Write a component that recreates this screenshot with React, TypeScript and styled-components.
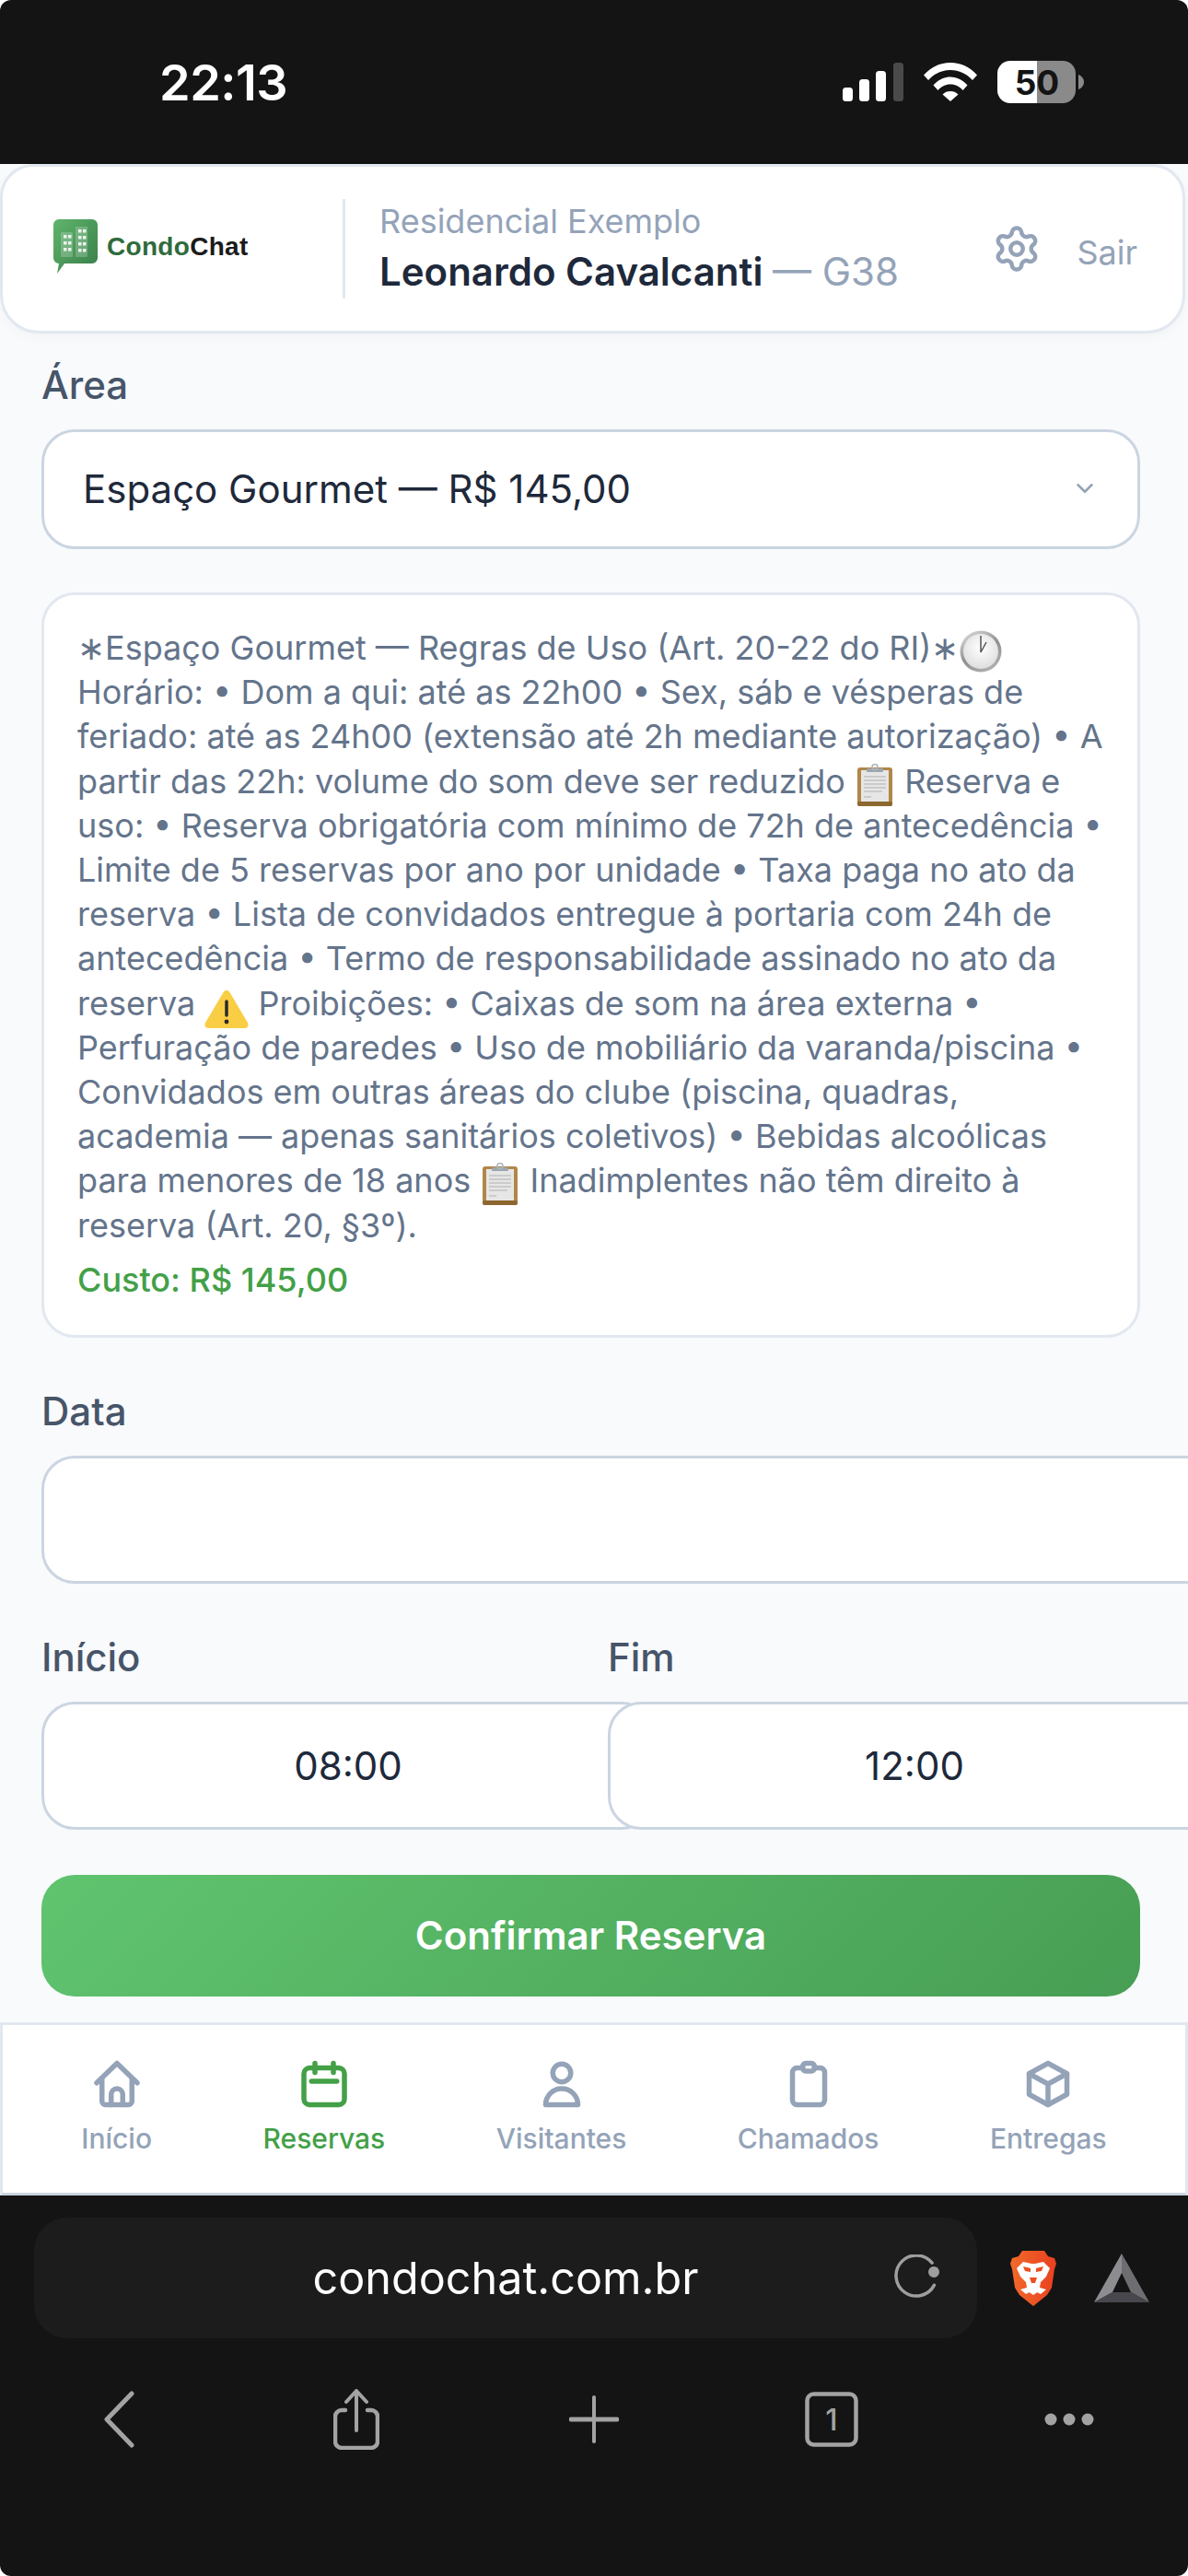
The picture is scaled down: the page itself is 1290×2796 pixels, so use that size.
import { createGlobalStyle, styled } from 'styled-components';
import { ChevronDown, Settings } from 'lucide-react';

const GlobalStyle = createGlobalStyle`
  html, body { margin: 0; padding: 0; background: #fff; }
  * { box-sizing: border-box; }
  body { font-family: Inter, "Noto Sans", sans-serif; }
`;

const Screen = styled.div`
  width: 1290px;
  height: 2796px;
  display: flex;
  flex-direction: column;
  overflow: hidden;
  border-radius: 12px;
  background: #f8fafc;
`;

const StatusBar = styled.div`
  height: 178px;
  flex: none;
  background: #141414;
  display: flex;
  align-items: center;
  padding: 0 113px 0 173px;
`;

const Clock = styled.span`
  font-size: 54px;
  font-weight: 600;
  letter-spacing: -0.5px;
  color: #fff;
  flex: 1;
`;

const StatusIcons = styled.div`
  display: flex;
  align-items: center;
  gap: 22px;
`;

const Header = styled.header`
  height: 184px;
  flex: none;
  margin-right: 3px;
  display: flex;
  align-items: center;
  padding: 0 49px 0 55px;
  background: #fff;
  border: 3px solid #e2e8f0;
  border-radius: 36px 36px 42px 42px;
  box-shadow: 0 4px 12px rgba(15, 23, 42, 0.03);
`;

const Divider = styled.div`
  width: 3px;
  height: 108px;
  background: #e2e8f0;
  margin: 0 37px 0 96px;
`;

const Identity = styled.div`
  flex: 1;
  display: flex;
  flex-direction: column;
  gap: 4px;
  padding-bottom: 2px;
`;

const Condo = styled.div`
  font-size: 36px;
  line-height: 48px;
  color: #94a3b8;
`;

const Resident = styled.div`
  font-size: 42px;
  line-height: 54px;
  font-weight: 600;
  color: #1e293b;
  white-space: nowrap;
`;

const Unit = styled.span`
  font-weight: 400;
  color: #94a3b8;
`;

const GearSlot = styled.span`
  display: flex;
  color: #94a3b8;
`;

const SignOut = styled.span`
  color: #94a3b8;
  font-size: 36px;
  margin-left: 38px;
  padding-top: 7px;
`;

const Form = styled.main`
  flex: 1;
  display: flex;
  flex-direction: column;
  padding: 32px 52px 0 45px;
`;

const Label = styled.label`
  display: block;
  font-size: 42px;
  line-height: 48px;
  font-weight: 500;
  color: #475569;
  margin-bottom: 24px;
`;

const Select = styled.div`
  height: 130px;
  flex: none;
  display: flex;
  align-items: center;
  justify-content: space-between;
  padding: 0 42px 2px;
  font-size: 42px;
  color: #1e293b;
  background: #fff;
  border: 3px solid #cbd5e1;
  border-radius: 36px;
  svg { color: #94a3b8; }
`;

const RulesCard = styled.section`
  flex: none;
  margin: 47px 0 56px;
  padding: 33px 36px 36px;
  background: #fff;
  border: 3px solid #e2e8f0;
  border-radius: 36px;
`;

const RulesText = styled.p`
  margin: 0;
  font-size: 36px;
  line-height: 48.2px;
  color: #64748b;
  svg { vertical-align: -8px; margin: -6px 0; }
`;

const ClosingStar = styled.span`
  letter-spacing: -9px;
`;

const Cost = styled.p`
  margin: 11px 0 0;
  font-size: 36px;
  line-height: 48px;
  font-weight: 500;
  color: #43a047;
`;

const Input = styled.div<{ $width: number }>`
  width: ${({ $width }) => $width}px;
  height: 139px;
  flex: none;
  display: flex;
  align-items: center;
  justify-content: center;
  font-size: 42px;
  color: #1e293b;
  background: #fff;
  border: 3px solid #cbd5e1;
  border-radius: 36px;
`;

const TimeRow = styled.div`
  display: flex;
  margin-top: 56px;
`;

const TimeField = styled.div`
  width: 615px;
  flex: none;
`;

const ConfirmButton = styled.button`
  height: 132px;
  flex: none;
  margin-top: 49px;
  border: 0;
  border-radius: 36px;
  font-family: inherit;
  font-size: 42px;
  font-weight: 600;
  color: #fff;
  background: linear-gradient(135deg, #60c46f 0%, #479e54 100%);
`;

const BottomNav = styled.nav`
  height: 188px;
  flex: none;
  display: flex;
  justify-content: space-around;
  padding: 34px 25px 0;
  background: #fff;
  border: 3px solid #e2e8f0;
  border-bottom-color: #cbd5e1;
`;

const NavItem = styled.div<{ $active?: boolean }>`
  display: flex;
  flex-direction: column;
  align-items: center;
  gap: 11px;
  font-size: 30px;
  line-height: 36px;
  font-weight: 500;
  color: ${({ $active }) => ($active ? '#43a047' : '#94a3b8')};
`;

const BrowserChrome = styled.div`
  height: 413px;
  flex: none;
  background: #141414;
  padding: 24px 0 0;
`;

const AddressRow = styled.div`
  display: flex;
  align-items: center;
  padding: 0 42px 0 37px;
`;

const UrlBar = styled.div`
  width: 1024px;
  height: 131px;
  position: relative;
  display: flex;
  align-items: center;
  justify-content: center;
  font-size: 48.500px;
  color: #fff;
  background: #1c1c1c;
  border-radius: 36px;
`;

const ReloadSlot = styled.span`
  position: absolute;
  right: 40px;
  top: 40px;
  display: flex;
`;

const AddressIcons = styled.div`
  flex: 1;
  display: flex;
  justify-content: space-between;
  align-items: center;
  padding-left: 36px;
`;

const Toolbar = styled.div`
  display: flex;
  justify-content: space-around;
  align-items: center;
  height: 120px;
  margin-top: 28px;
`;

const ToolbarSlot = styled.span`
  display: flex;
  width: 70px;
  height: 70px;
  align-items: center;
  justify-content: center;
`;

function SignalIcon() {
  return (
    <svg width="66" height="42" viewBox="0 0 66 42">
      <rect x="0" y="27" width="11" height="15" rx="3.500" fill="#fff" />
      <rect x="18" y="18" width="11" height="24" rx="3.500" fill="#fff" />
      <rect x="36" y="9" width="11" height="33" rx="3.500" fill="#fff" />
      <rect x="55" y="0" width="11" height="42" rx="3.500" fill="#4a4a4a" />
    </svg>
  );
}

function WifiIcon() {
  return (
    <svg width="58" height="42" viewBox="0 0 58 42" fill="#fff">
      <path d="M0 13.500C7.500 5 17.500 0 29 0s21.500 5 29 13.500l-5 5.500C46.500 12 38.500 8 29 8S11.500 12 5 19Z" />
      <path d="M10.500 24.500C15.500 19 21.500 15.500 29 15.500s13.500 3.500 18.500 9l-5 5.500c-3.500-4-8-6.500-13.500-6.500s-10 2.500-13.500 6.500Z" />
      <path d="M20.500 34.500c2.500-2.500 5-3.500 8.500-3.500s6 1 8.500 3.500L29 42Z" />
    </svg>
  );
}

function BatteryIcon() {
  return (
    <svg width="94" height="46" viewBox="0 0 94 46">
      <defs>
        <clipPath id="battery-body">
          <rect x="0" y="0" width="85" height="46" rx="14" />
        </clipPath>
      </defs>
      <g clipPath="url(#battery-body)">
        <rect x="0" y="0" width="43" height="46" fill="#fff" />
        <rect x="43" y="0" width="42" height="46" fill="#8a8a8a" />
      </g>
      <path d="M88 15c3 1 6 4 6 8s-3 7-6 8Z" fill="#8a8a8a" />
      <text x="43" y="37" textAnchor="middle" fontFamily="Inter, sans-serif" fontSize="37" fontWeight="700" fill="#141414">
        50
      </text>
    </svg>
  );
}

function Logo() {
  return (
    <svg width="218" height="64" viewBox="0 0 218 64">
      <defs>
        <linearGradient id="logo-green" x1="0" y1="0" x2="1" y2="1">
          <stop offset="0" stopColor="#5fb56c" />
          <stop offset="1" stopColor="#387d48" />
        </linearGradient>
      </defs>
      <path d="M6 0h36a6 6 0 0 1 6 6v36a6 6 0 0 1-6 6H12L4 59l2-11a6 6 0 0 1-6-6V6a6 6 0 0 1 6-6Z" fill="url(#logo-green)" />
      <rect x="8" y="14" width="13" height="27" rx="1" fill="#fff" fillOpacity="0.22" />
      <rect x="24" y="8" width="13" height="33" rx="1" fill="#fff" fillOpacity="0.22" />
      {[17, 24, 31].map((y) =>
        [11, 16].map((x) => <rect key={`a${x}${y}`} x={x} y={y} width="3.500" height="3.500" fill="#fff" fillOpacity="0.85" />)
      )}
      {[11, 18, 25, 32].map((y) =>
        [27, 32].map((x) => <rect key={`b${x}${y}`} x={x} y={y} width="3.500" height="3.500" fill="#fff" fillOpacity="0.85" />)
      )}
      <text x="58" y="39" fontFamily="Liberation Sans, Arial, sans-serif" fontSize="28" fontWeight="700" letterSpacing="0.3">
        <tspan fill="#2f6b3c">Condo</tspan>
        <tspan fill="#1b1b1b">Chat</tspan>
      </text>
    </svg>
  );
}

function ClockEmoji() {
  return (
    <svg width="46" height="46" viewBox="0 0 46 46">
      <defs>
        <linearGradient id="clock-bezel" x1="0.2" y1="0" x2="0.8" y2="1">
          <stop offset="0" stopColor="#d8d8d8" />
          <stop offset="0.5" stopColor="#8f8f8f" />
          <stop offset="1" stopColor="#b5b5b5" />
        </linearGradient>
        <radialGradient id="clock-face" cx="0.5" cy="0.4" r="0.65">
          <stop offset="0" stopColor="#ffffff" />
          <stop offset="1" stopColor="#dcdcdc" />
        </radialGradient>
      </defs>
      <circle cx="23" cy="23" r="22.500" fill="url(#clock-bezel)" />
      <circle cx="23" cy="23" r="19" fill="url(#clock-face)" />
      <path d="M23 24V6" stroke="#555" strokeWidth="1.500" />
      <path d="M23 24l6-11" stroke="#555" strokeWidth="1.500" />
    </svg>
  );
}

function ClipboardEmoji() {
  return (
    <svg width="44" height="46" viewBox="0 0 44 46">
      <rect x="3" y="4" width="38" height="42" rx="3" fill="#b08748" />
      <rect x="3" y="41" width="38" height="5" rx="2" fill="#8c6730" />
      <rect x="7" y="7" width="30" height="34" fill="#e6e6e6" />
      <rect x="13" y="5" width="18" height="4" rx="1" fill="#9ea6ad" />
      <circle cx="22" cy="3.500" r="3" fill="none" stroke="#aeb5bb" strokeWidth="1.600" />
      <path d="M10 14h24M10 18h24M10 22h24M10 26h24M10 30h20M10 36h8" stroke="#c2c2c2" strokeWidth="1.400" />
    </svg>
  );
}

function WarningEmoji() {
  return (
    <svg width="48" height="42" viewBox="0 0 48 42">
      <path d="M24 1c2 0 3 1 4 3l19 32c1.500 3 0 6-3.500 6h-39C1 42-.5 39 1 36L20 4c1-2 2-3 4-3Z" fill="#f9ce45" />
      <path d="M24 13v15" stroke="#2a2a2a" strokeWidth="3.500" strokeLinecap="round" />
      <circle cx="24" cy="35" r="2.400" fill="#2a2a2a" />
    </svg>
  );
}

function NavGlyph({ children }: { children: React.ReactNode }) {
  return (
    <svg width="60" height="60" viewBox="0 0 24 24" fill="none" stroke="currentColor" strokeWidth="2.200" strokeLinecap="round" strokeLinejoin="round">
      {children}
    </svg>
  );
}

function HouseIcon() {
  return (
    <NavGlyph>
      <path d="M3.200 11.500L12 3l8.800 8.500" />
      <path d="M5.500 9.500V19.500a1.500 1.500 0 0 0 1.500 1.500h10a1.500 1.500 0 0 0 1.500-1.500V9.500" />
      <path d="M9.500 21v-4.500a2.500 2.500 0 0 1 5 0V21" />
    </NavGlyph>
  );
}

function CalendarIcon() {
  return (
    <NavGlyph>
      <rect x="3.200" y="5" width="17.600" height="16" rx="2.500" />
      <path d="M8 3v4M16 3v4M6.500 10.800h11" />
    </NavGlyph>
  );
}

function UserIcon() {
  return (
    <NavGlyph>
      <circle cx="12" cy="7.200" r="3.900" />
      <path d="M5 21a7 7 0 0 1 14 0Z" />
    </NavGlyph>
  );
}

function ClipboardIcon() {
  return (
    <NavGlyph>
      <path d="M9.500 5H7a2 2 0 0 0-2 2v12a2 2 0 0 0 2 2h10a2 2 0 0 0 2-2V7a2 2 0 0 0-2-2h-2.500" />
      <rect x="9.500" y="3" width="5" height="3.400" rx="1.200" />
    </NavGlyph>
  );
}

function BoxIcon() {
  return (
    <NavGlyph>
      <path d="M12 3l8.200 4.500v9L12 21l-8.200-4.500v-9Z" />
      <path d="M3.800 7.500L12 12l8.200-4.500M12 12v9" />
    </NavGlyph>
  );
}

function ReloadIcon() {
  return (
    <svg width="50" height="48" viewBox="0 0 50 48" fill="none">
      <path d="M40 8A22 22 0 1 0 44 32" stroke="#9e9e9e" strokeWidth="3.500" strokeLinecap="round" transform="rotate(4 24 24)" />
      <circle cx="43" cy="19" r="6" fill="#9e9e9e" />
    </svg>
  );
}

function BraveIcon() {
  return (
    <svg width="50" height="60" viewBox="0 0 50 60">
      <defs>
        <linearGradient id="brave-orange" x1="0" y1="0" x2="1" y2="0">
          <stop offset="0" stopColor="#f26a2a" />
          <stop offset="1" stopColor="#e8401f" />
        </linearGradient>
      </defs>
      <path d="M13 0h24l4 6 7 2 2 6-2 6-3 20-5 8-15 12-15-12-5-8-3-20-2-6 2-6 7-2Z" fill="url(#brave-orange)" />
      <path d="M7 19l7-7 9 2h4l9-2 7 7-4 9-6 6-1 6 7 2-6 5-8-4-8 4-6-5 7-2-1-6-6-6Z" fill="#fff" />
      <path d="M14 17l8 2v4l-6-1Zm22 0l-8 2v4l6-1ZM21 29h8l-2 6h-4Z" fill="#ec4f22" />
      <path d="M16 42l9-3 9 3-9 6Z" fill="#fff" />
    </svg>
  );
}

function BatIcon() {
  return (
    <svg width="60" height="54" viewBox="0 0 60 54">
      <path d="M30 0L0 53l20-11L30 21Z" fill="#8d8c91" />
      <path d="M30 0l30 53-20-11L30 21Z" fill="#6e6d72" />
      <path d="M0 53h60L40 42H20Z" fill="#48474c" />
    </svg>
  );
}

function BackIcon() {
  return (
    <svg width="34" height="62" viewBox="0 0 34 62" fill="none">
      <path d="M31 3L4 31l27 28" stroke="#a3a3a3" strokeWidth="5" strokeLinecap="round" strokeLinejoin="round" />
    </svg>
  );
}

function ShareIcon() {
  return (
    <svg width="50" height="66" viewBox="0 0 50 66" fill="none" stroke="#a3a3a3" strokeLinecap="round" strokeLinejoin="round">
      <path d="M13 23H9a7 7 0 0 0-7 7v27a7 7 0 0 0 7 7h32a7 7 0 0 0 7-7V30a7 7 0 0 0-7-7h-4" strokeWidth="4.500" />
      <path d="M25 45V3" strokeWidth="4" />
      <path d="M14 14L25 2l11 12" strokeWidth="4" />
    </svg>
  );
}

function PlusIcon() {
  return (
    <svg width="54" height="52" viewBox="0 0 54 52" fill="none" stroke="#a3a3a3" strokeLinecap="round">
      <path d="M27 2v48" strokeWidth="4" />
      <path d="M2 26h50" strokeWidth="5" />
    </svg>
  );
}

function TabsIcon() {
  return (
    <svg width="58" height="60" viewBox="0 0 58 60">
      <rect x="2.500" y="2.500" width="53" height="55" rx="7" fill="none" stroke="#a3a3a3" strokeWidth="4.500" />
      <text x="29" y="42" textAnchor="middle" fontFamily="Inter, sans-serif" fontSize="32" fontWeight="500" fill="#a3a3a3">
        1
      </text>
    </svg>
  );
}

function MoreIcon() {
  return (
    <svg width="54" height="14" viewBox="0 0 54 14" fill="#a3a3a3">
      <circle cx="7" cy="7" r="6.500" />
      <circle cx="27" cy="7" r="6.500" />
      <circle cx="47" cy="7" r="6.500" />
    </svg>
  );
}

export default function App() {
  return (
    <>
      <GlobalStyle />
      <Screen>
        <StatusBar>
          <Clock>22:13</Clock>
          <StatusIcons>
            <SignalIcon />
            <WifiIcon />
            <BatteryIcon />
          </StatusIcons>
        </StatusBar>

        <Header>
          <Logo />
          <Divider />
          <Identity>
            <Condo>Residencial Exemplo</Condo>
            <Resident>
              Leonardo Cavalcanti <Unit>— G38</Unit>
            </Resident>
          </Identity>
          <GearSlot>
            <Settings size={54} strokeWidth={2} />
          </GearSlot>
          <SignOut>Sair</SignOut>
        </Header>

        <Form>
          <Label>Área</Label>
          <Select>
            Espaço Gourmet — R$ 145,00
            <ChevronDown size={30} strokeWidth={2} />
          </Select>

          <RulesCard>
            <RulesText>
              ∗Espaço Gourmet — Regras de Uso (Art. 20-22 do RI)<ClosingStar>∗</ClosingStar> <ClockEmoji /> Horário: • Dom a qui: até as 22h00 • Sex, sáb e vésperas de feriado: até as 24h00 (extensão até 2h mediante autorização) • A partir das 22h: volume do som deve ser reduzido <ClipboardEmoji /> Reserva e uso: • Reserva obrigatória com mínimo de 72h de antecedência • Limite de 5 reservas por ano por unidade • Taxa paga no ato da reserva • Lista de convidados entregue à portaria com 24h de antecedência • Termo de responsabilidade assinado no ato da reserva <WarningEmoji /> Proibições: • Caixas de som na área externa • Perfuração de paredes • Uso de mobiliário da varanda/piscina • Convidados em outras áreas do clube (piscina, quadras, academia — apenas sanitários coletivos) • Bebidas alcoólicas para menores de 18 anos <ClipboardEmoji /> Inadimplentes não têm direito à reserva (Art. 20, §3º).
            </RulesText>
            <Cost>Custo: R$ 145,00</Cost>
          </RulesCard>

          <Label>Data</Label>
          <Input $width={1300} />

          <TimeRow>
            <TimeField>
              <Label>Início</Label>
              <Input $width={666}>08:00</Input>
            </TimeField>
            <TimeField>
              <Label>Fim</Label>
              <Input $width={666}>12:00</Input>
            </TimeField>
          </TimeRow>

          <ConfirmButton>Confirmar Reserva</ConfirmButton>
        </Form>

        <BottomNav>
          <NavItem>
            <HouseIcon />
            Início
          </NavItem>
          <NavItem $active>
            <CalendarIcon />
            Reservas
          </NavItem>
          <NavItem>
            <UserIcon />
            Visitantes
          </NavItem>
          <NavItem>
            <ClipboardIcon />
            Chamados
          </NavItem>
          <NavItem>
            <BoxIcon />
            Entregas
          </NavItem>
        </BottomNav>

        <BrowserChrome>
          <AddressRow>
            <UrlBar>
              condochat.com.br
              <ReloadSlot>
                <ReloadIcon />
              </ReloadSlot>
            </UrlBar>
            <AddressIcons>
              <BraveIcon />
              <BatIcon />
            </AddressIcons>
          </AddressRow>
          <Toolbar>
            <ToolbarSlot><BackIcon /></ToolbarSlot>
            <ToolbarSlot><ShareIcon /></ToolbarSlot>
            <ToolbarSlot><PlusIcon /></ToolbarSlot>
            <ToolbarSlot><TabsIcon /></ToolbarSlot>
            <ToolbarSlot><MoreIcon /></ToolbarSlot>
          </Toolbar>
        </BrowserChrome>
      </Screen>
    </>
  );
}
